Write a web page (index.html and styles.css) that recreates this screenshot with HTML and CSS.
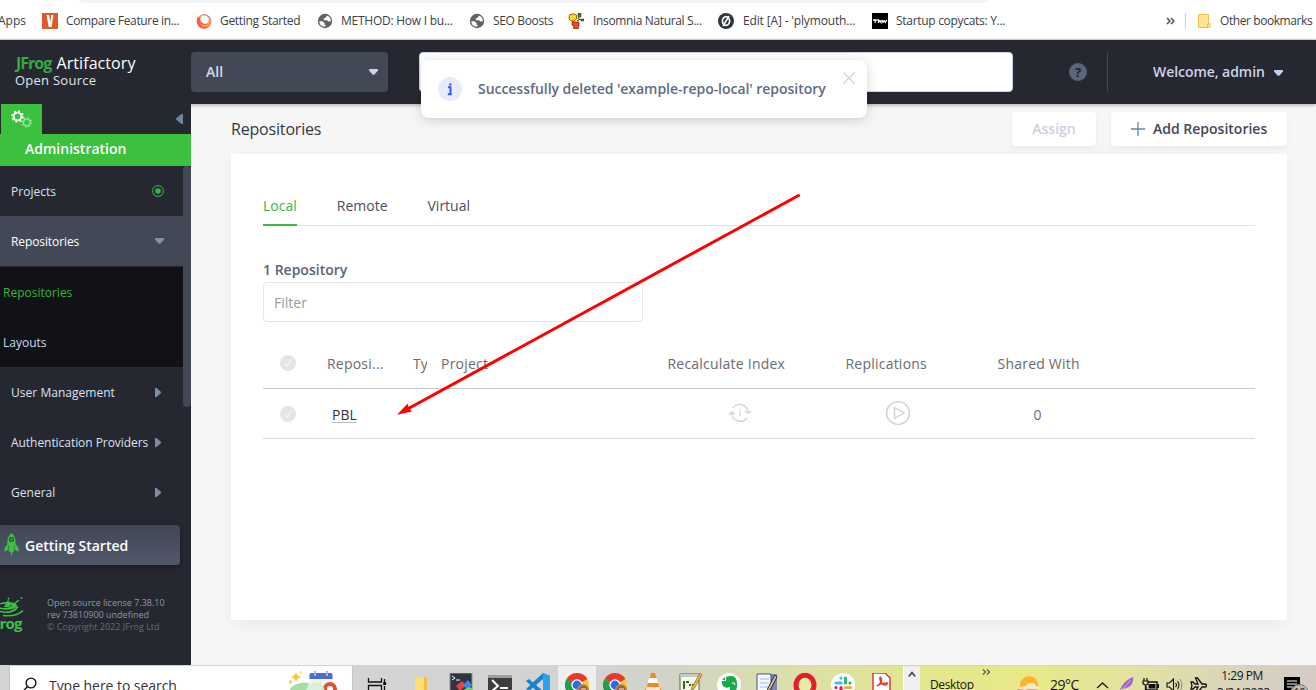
FILE: index.html
```html
<!DOCTYPE html>
<html lang="en">
<head>
<meta charset="utf-8">
<title>JFrog Artifactory - Repositories</title>
<link rel="stylesheet" href="styles.css">
</head>
<body>
<svg width="0" height="0" class="defs">
  <defs>
    <linearGradient id="fire" x1="0" y1="1" x2="1" y2="0"><stop offset="0" stop-color="#ff4f5e"/><stop offset=".4" stop-color="#ff8a3c"/><stop offset=".6" stop-color="#ffb54a"/><stop offset="1" stop-color="#9059ff"/></linearGradient>
    <symbol id="globe" viewBox="0 0 16 16"><circle cx="8" cy="8" r="7.200" fill="#5f6368"/><path d="M2.300 8.300h3.200l2 1.700v1.200l1 .7v1.700C5 14 2.500 12 2.300 8.300M7 5.300l2.300-1V2.800l1.700.1c2 1.200 3 3 2.800 5.300l-2.300.2-1.500-1.200H7.500L6.700 6.500z" fill="#fff"/></symbol>
    <symbol id="chrome" viewBox="0 0 24 24"><circle cx="12" cy="12" r="12" fill="#fcc934"/><path d="M12 12 1.600 6A12 12 0 0 1 22.400 6z" fill="#e33b2e"/><path d="M12 12 1.600 6A12 12 0 0 0 12 24z" fill="#279b4b"/><circle cx="12" cy="12" r="5.700" fill="#fff"/><circle cx="12" cy="12" r="4.400" fill="#2470e8"/><circle cx="18" cy="17" r="6" fill="#b88657"/><path d="M14 16c1-4 6-5 8-1l1 9h-9z" fill="#946342"/><path d="M16 15h5v5h-5z" fill="#d8a47e"/></symbol>
    <symbol id="check" viewBox="0 0 16 16"><circle cx="8" cy="8" r="8" fill="#e5e5e5"/><path d="m4.500 8.500 2.300 2.500 4.700-6" fill="none" stroke="#fff" stroke-width="1"/></symbol>
    <symbol id="caret" viewBox="0 0 9 6"><path d="M.8 0h7.400q.8 0 .8 1v.6L5.500 5.400q-1 .9-2 0L0 1.600V1q0-1 .8-1"/></symbol>
  </defs>
</svg>
<div class="screen">
  <div class="bookmarks">
    <div class="omnibox-edge"></div>
    <div class="bm bm-apps"><span>Apps</span></div>
    <div class="bm bm-1"><svg class="i16" viewBox="0 0 16 16"><path fill="#dc5b27" d="M0 0h16v16H0z"/><path d="M4.500 2h2.700L8.200 10l1-8h2.200L9.600 14H6.700z" fill="#fff"/></svg><span>Compare Feature in...</span></div>
    <div class="bm bm-2"><svg class="i16" viewBox="0 0 16 16"><circle cx="8" cy="8.300" r="7.300" fill="url(#fire)"/><circle cx="8.600" cy="6.600" r="4.200" fill="#fff"/><path d="M1.500 4c-2 6 1 10.500 5 11.500 5 1 8.500-3 9-7-2 3-4.500 3.500-7.500 2.500-3-1-4.500-3-4-6" fill="#ff5a45"/><path d="M4 10c3 3 8 3 11-.5-1 4-8 7-11 .5" fill="#ffb53d"/></svg><span>Getting Started</span></div>
    <div class="bm bm-3"><svg class="i16"><use href="#globe"/></svg><span>METHOD: How I bu...</span></div>
    <div class="bm bm-4"><svg class="i16"><use href="#globe"/></svg><span>SEO Boosts</span></div>
    <div class="bm bm-5"><svg class="i16" viewBox="0 0 16 16"><path d="M10 0h3v4h-3zM12 6h4v2h-3z" fill="#486b24" stroke="#30451c" stroke-width=".5"/><path d="m10 6 1-2M9 8l3-2" stroke="#30451c"/><path d="M1.500 2 5 .700 8.500 2v4L6 8H3L1 6z" fill="#ffd82f" stroke="#9b6500"/><path d="m5 8 2 2" stroke="#5a6414"/><path d="M4 9h7v3l-1 4H6l-1-4H4z" fill="#ef4a22" stroke="#89260e" stroke-width=".8"/></svg><span>Insomnia Natural S...</span></div>
    <div class="bm bm-6"><svg class="i16" viewBox="0 0 16 16"><circle cx="8" cy="8" r="8" fill="#2c363b"/><ellipse cx="8" cy="8" rx="3.600" ry="4.300" fill="none" stroke="#fff" stroke-width="1.700"/><path d="m5 13 6-10" stroke="#fff" stroke-width="1.500"/></svg><span>Edit [A] - 'plymouth...</span></div>
    <div class="bm bm-7"><svg class="i16" viewBox="0 0 16 16"><path d="M0 0h16v16H0z"/><path d="M1 7h4.500M3.200 7v2.800M6.500 10V7l2.500 2.500V7M10.300 7l.7 2.300 1.300-1.500 1 1.500L14.800 7" fill="none" stroke="#fff" stroke-width="1.300"/></svg><span>Startup copycats: Y...</span></div>
    <svg class="more" viewBox="0 0 9 8"><path d="m1 1 3 3-3 3M5 1l3 3-3 3" fill="none" stroke="#4c5054" stroke-width="1.500"/></svg>
    <div class="bm bm-other"><svg class="folder" viewBox="0 0 13 14"><path d="M.5.500h10v9h1.500v4H.5z" fill="#ffe495" stroke="#e7c34a"/><path d="M9.500 13v-3h2" fill="none" stroke="#e7c34a"/></svg><span>Other bookmarks</span></div>
  </div>

  <header class="topbar">
    <div class="brand"><div class="brand-name"><b>JFrog</b> Artifactory</div><div class="brand-sub">Open Source</div></div>
    <div class="scope"><span>All</span><svg class="caret" fill="#cdd2e4"><use href="#caret"/></svg></div>
    <div class="search"></div>
    <div class="help">?</div>
    <div class="user"><span>Welcome, admin</span><svg class="caret" fill="#c5cee8"><use href="#caret"/></svg></div>
  </header>

  <div class="workspace">
    <aside class="sidebar">
      <div class="side-tabs">
        <div class="gear-tab"><svg width="22" height="18" viewBox="0 0 22 18"><g fill="none" stroke="#fff"><circle cx="6.500" cy="6.500" r="3.900" stroke-width="1.900"/><circle cx="6.500" cy="6.500" r="5.300" stroke-width="1.900" stroke-dasharray="1.900 2.260"/></g><g fill="none" stroke="#9ce29e"><circle cx="15.800" cy="12.400" r="3.300" stroke-width="1.300"/><circle cx="15.800" cy="12.400" r="4.600" stroke-width="1.500" stroke-dasharray="1.600 2.010"/></g></svg></div>
        <svg class="collapse" viewBox="0 0 7 10"><path d="M7 0v10H5.500L.5 6q-1-1 0-2l5-4z" fill="#71839d"/></svg>
      </div>
      <div class="admin">Administration</div>
      <div class="menu-wrap">
        <nav class="menu">
          <div class="item"><span>Projects</span><svg width="12" height="12" viewBox="0 0 12 12"><circle cx="6" cy="6" r="5.400" fill="none" stroke="#3c9c42" stroke-width="1.100"/><circle cx="6" cy="6" r="2.800" fill="#3fae48"/></svg></div>
          <div class="item open"><span>Repositories</span><svg class="caret" fill="#7f91ab"><use href="#caret"/></svg></div>
          <div class="submenu"><div class="sub current">Repositories</div><div class="sub">Layouts</div></div>
          <div class="item"><span>User Management</span><svg class="right" viewBox="0 0 6 9"><path d="M0 0h1.500L5.500 3.500q1 1 0 2L1.500 9H0z" fill="#7d8da4"/></svg></div>
          <div class="item"><span class="tight">Authentication Providers</span><svg class="right" viewBox="0 0 6 9"><path d="M0 0h1.500L5.500 3.500q1 1 0 2L1.500 9H0z" fill="#7d8da4"/></svg></div>
          <div class="item"><span>General</span><svg class="right" viewBox="0 0 6 9"><path d="M0 0h1.500L5.500 3.500q1 1 0 2L1.500 9H0z" fill="#7d8da4"/></svg></div>
        </nav>
        <div class="thumb"></div>
      </div>
      <div class="start"><svg width="15" height="24" viewBox="0 0 15 24"><path d="M7.500 0C4 3 3 7 3.500 11L.5 15v4l3-2h1l1 2h1l1 5 1-5h1l1-2h1l3 2v-4l-3-4C12 7 11 3 7.500 0" fill="#42bd48"/><circle cx="7.500" cy="6.500" r="1.900" fill="#42bd48" stroke="#27492f" stroke-width="1.200"/><path d="M4.500 12.500v4m6-4v4" stroke="#28723a" stroke-width=".8"/></svg><span>Getting Started</span></div>
      <footer class="side-foot">
        <div class="frog"><svg width="24" height="20" viewBox="0 0 24 20"><g fill="none" stroke="#42bd48" stroke-width="1.600"><path d="M0 14.500c8 2 15 0 18-5M3 18.500c9 1 16-1 20-5"/></g><path d="M0 6.500C5 4 16 5 17 8.500c0 4-10 5-17 3.500v-1.500c5 1 11 0 12-2-2-2-8-2-12-1z" fill="#42bd48"/><path d="m8 4 .5 2 1.500 3-5 .5 2-3.500zM14 7l5-4" stroke="#42bd48" stroke-width="1.300" fill="#42bd48"/><circle cx="8.500" cy="1.500" r=".9" fill="#42bd48"/><circle cx="21.500" cy="1" r="1" fill="#42bd48"/></svg><b>Frog</b></div>
        <div class="license"><div>Open source license 7.38.10</div><div>rev 73810900 undefined</div><div class="copy">© Copyright 2022 JFrog Ltd</div></div>
      </footer>
    </aside>

    <main class="content">
      <div class="title-row"><h1>Repositories</h1><button class="btn assign">Assign</button><button class="btn add"><svg width="14" height="14" viewBox="0 0 14 14"><path d="M7 0v14M0 7h14" stroke="#6289a9" stroke-width="1.300"/></svg><span>Add Repositories</span></button></div>
      <section class="panel">
        <div class="tabs"><span class="tab active">Local</span><span class="tab remote">Remote</span><span class="tab">Virtual</span></div>
        <div class="count">1 Repository</div>
        <div class="filter">Filter</div>
        <div class="table">
          <div class="row head"><span class="tick"><svg width="16" height="16"><use href="#check"/></svg></span><span>Reposi...</span><span class="clip">Ty</span><span>Project</span><span>Recalculate Index</span><span>Replications</span><span>Shared With</span></div>
          <div class="row body"><span class="tick"><svg width="16" height="16"><use href="#check"/></svg></span><span class="repo"><u>PBL</u></span><span></span><span></span>
            <span class="recalc"><svg width="24" height="20" viewBox="0 0 24 20"><g fill="none" stroke="#d3d3d3" stroke-width="1.300"><path d="M5 5a8.500 8.500 0 0 1 15.300 4M19 15A8.500 8.500 0 0 1 3.700 10M1 12l2.700-3 3.300 2.500M17 8l3.300 2.500L23 8"/><path d="M12 8v5.500M12 5.500v1.300" stroke-width="1.300"/></g></svg></span>
            <span class="replic"><svg width="26" height="26" viewBox="0 0 26 26"><circle cx="13" cy="13" r="11.400" fill="none" stroke="#d0d0d0" stroke-width="1.400"/><path d="m9.500 7.500 9.700 5.500-9.700 5.500z" fill="none" stroke="#d0d0d0" stroke-width="1.400" stroke-linejoin="round"/></svg></span>
            <span class="shared">0</span></div>
        </div>
      </section>
    </main>
  </div>

  <footer class="taskbar">
    <div class="task-search"><svg width="18" height="20" viewBox="0 0 18 20"><circle cx="9" cy="6" r="4.900" fill="none" stroke="#111" stroke-width="1.400"/><path d="m5.500 9.500-5 5.500" stroke="#111" stroke-width="1.400"/></svg><span>Type here to search</span>
      <svg class="doodle" width="60" height="20" viewBox="0 0 60 20"><path d="M7 1q1 4 5 5-4 1-5 5-1-4-5-5 4-1 5-5M2 9l1 2-2 2-2-2M12 0l1 1-1 2-1-2" fill="#ffc72a"/><ellipse cx="17" cy="20" rx="16" ry="8.500" fill="#a6dda1"/><path d="M18 11c10 0 15 5 15 9H22z" fill="#daf5da"/><rect x="20.500" y="2" width="23" height="18" rx="2" fill="#f2f4fa"/><path d="M20.500 8V4q0-2 2-2h19q2 0 2 2v4z" fill="#4b6dd0"/><path d="M26 0v5M38 0v5" stroke="#adb7c9" stroke-width="2"/><circle cx="41" cy="18" r="5" fill="#fff" stroke="#e2542d" stroke-width="4"/><path d="M32 11c-10 0-14 3-15 9h19z" fill="#d9f1da"/></svg>
    </div>
    <div class="tasks">
      <svg class="t t-view" viewBox="0 0 24 24"><path d="M2.500 2v4h13V2M2.500 9.500h13v9h-13zM18.500 3v3m0 4v7" fill="none" stroke="#111" stroke-width="1.300"/><path d="M17.200 6h3v3h-3z" fill="#111"/></svg>
      <svg class="t t-folder" viewBox="0 0 24 24"><path d="M6 2h12v22H6z" fill="#ffdc74"/><path d="M15 2h3v17h2v5h-5z" fill="#f1bd44"/></svg>
      <svg class="t t-term" viewBox="0 0 24 24"><path d="M1 0h22v24H1z" fill="#30353d" stroke="#899097"/><path d="m3 3 3 2-3 2M7 7h4" fill="none" stroke="#fff"/><path d="m7 13 6-5 4 4-6 6z" fill="#e94242"/><path d="m14 12 5-5 4 5-5 5z" fill="#3f83ef"/><path d="m14 17 6-3 3 1v6h-9z" fill="#74d943"/></svg>
      <svg class="t" viewBox="0 0 24 24"><path d="M0 2h24v22H0z" fill="#3b3d3f"/><path d="M0 2h24v3H0z" fill="#9b9da0"/><path d="m4 7 6 6-6 5M12 15h8" fill="none" stroke="#fff" stroke-width="2"/></svg>
      <svg class="t t-code" viewBox="0 0 24 24"><path d="m17 0 7 3v18l-7 3L0 8l3-2 14 12V6L3 18l-3-2z" fill="#1683ce"/><path d="m17 0 7 3v18l-7 3z" fill="#29a4ec"/></svg>
      <div class="running"><svg class="t" viewBox="0 0 24 24"><use href="#chrome"/></svg></div>
      <svg class="t" viewBox="0 0 24 24"><use href="#chrome"/></svg>
      <svg class="t" viewBox="0 0 24 24"><path d="M10 0h4l6 20H4z" fill="#f08924"/><path d="M8.200 5h7.400l1.600 5H6.600z" fill="#fff"/><path d="M4 16h16l4 8H0z" fill="#ef7f1a"/><path d="M6 14h12l1 3q-7 3-14 0z" fill="#f6e8d8"/></svg>
      <svg class="t" viewBox="0 0 24 24"><path d="M1 1h19v23H1z" fill="#f7f8ec" stroke="#596251"/><path d="M1 1h19v3H1z" fill="#c5c9c2"/><path d="M5 8v8M7 9h3M10 12h2m1 0h2" stroke="#38641f" stroke-width="2"/><path d="m21 0 2 2-8 14-3 1 1-3z" fill="#edb333" stroke="#6b5b32" stroke-width=".6"/></svg>
      <svg class="t" viewBox="0 0 24 24"><circle cx="12" cy="12" r="12" fill="#fff"/><path d="M5 8h4V4c5-2 9-1 10 2 2 5 1 10-1 14h-5v-6c-5 2-9-1-8-6" fill="#18ab4b"/><path d="m5 7 3-3v3z" fill="#18ab4b"/><path d="M15 10q3-1 3 2" stroke="#fff" fill="none"/></svg>
      <svg class="t" viewBox="0 0 24 24"><path d="M2 1h20v23H2z" fill="#7d86b2"/><path d="M2 1h14v23H2z" fill="#f4f7ff" stroke="#454f82"/><path d="M5 6h9M5 10h9M5 14h9" stroke="#9ebee4"/><path d="m20 2 2 2-7 13-3 2 1-4z" fill="#e8c27c" stroke="#252845"/></svg>
      <svg class="t" viewBox="0 0 24 24"><ellipse cx="12" cy="12" rx="9" ry="9.800" fill="#e8eba5" stroke="#e51d2b" stroke-width="5"/></svg>
      <svg class="t" viewBox="0 0 24 24"><circle cx="12" cy="12" r="12" fill="#fff"/><g fill="none" stroke-width="3.200" stroke-linecap="round"><path d="M10 5v.1M5 10h5" stroke="#36c5f0"/><path d="M14.500 5v5M19 10v.1" stroke="#2eb67d"/><path d="M5 14.500v.1M10 14.500v5" stroke="#e01e5a"/><path d="M14.500 19.500v.1M14.500 14.500h5" stroke="#ecb22e"/></g></svg>
      <svg class="t" viewBox="0 0 24 24"><path d="M4 0h12l5 5v19H4z" fill="#fff" stroke="#d82f2a" stroke-width="1.400"/><path d="M8 13c4-2 5-6 4-8s-2 0 0 4c2 3 4 4 6 2s-6-1-10 2" fill="none" stroke="#df3932" stroke-width="1.500"/><path d="M8 18h9" stroke="#444" stroke-width="2"/></svg>
    </div>
    <div class="scroll-up"><svg width="8" height="7" viewBox="0 0 8 7"><path d="m.8 5.500 3.200-4 3.200 4" fill="none" stroke="#444" stroke-width="1.600"/></svg></div>
    <div class="tray">
      <span class="desktop">Desktop</span><svg class="chev" viewBox="0 0 9 6"><path d="m1 .5 2.500 2.500L1 5.500M5 .5 7.500 3 5 5.500" fill="none" stroke="#565b73" stroke-width="1.200"/></svg>
      <svg class="weather" viewBox="0 0 24 16"><circle cx="12" cy="9" r="9" fill="#ffb52a"/><path d="M1 13q2-3 8-3 2-4 7-3 3 1 3 3 3 0 4 2l-7 4H5z" fill="#f9e9cb"/><path d="M0 13q5 0 8 1 6-2 14 0l-4 2H3z" fill="#c69274"/></svg><span class="temp">29°C</span>
      <svg class="up" viewBox="0 0 13 8"><path d="m1 7 5.500-5L12 7" fill="none" stroke="#222" stroke-width="1.400"/></svg>
      <svg class="feather" viewBox="0 0 15 17"><path d="M0 16C2 9 5 4 14 0c1 7-4 12-12 12" fill="#9d65c5"/><path d="M0 16 12 3" stroke="#d7b6ee"/></svg>
      <svg class="battery" viewBox="0 0 17 16"><path d="M6 4h9v8H4V8" fill="none" stroke="#111" stroke-width="1.400"/><path d="M6.500 6h7v4.500h-7zM15 6h2v4h-2z" fill="#111"/><path d="M1 3h5v2.500q-2.500 3-5 0zM2 0v3M5 0v3M3.500 7v7" fill="none" stroke="#111" stroke-width="1.200"/></svg>
      <svg class="speaker" viewBox="0 0 17 14"><path d="M1 5h2.500l4-4v12l-4-4H1zM9.500 5q2 2 0 4M11.500 3q3 4 0 8" fill="none" stroke="#111" stroke-width="1.100"/><path d="M14 1q4 6 0 12" fill="none" stroke="#8b8c83"/></svg>
      <svg class="plane" viewBox="0 0 17 16"><path d="M1 5h2l2 2h3L5.500 1h2L12 7h2.500q2 0 2 1.500T14.500 10H12l-4.500 6h-2L8 10H5l-2 2H1l1-3.500z" fill="none" stroke="#111" stroke-width="1.300"/></svg>
      <div class="clock"><div>1:29 PM</div><div>3/24/2022</div></div>
      <div class="notify"><svg width="16" height="16" viewBox="0 0 16 16"><path d="M0 0h16v16H0z"/><path d="M3 4h10M3 7h10M3 10h6" stroke="#fff" stroke-width="1.200"/></svg><span class="badge">10</span></div>
    </div>
  </footer>

  <div class="toast"><div class="info"><svg width="24" height="24" viewBox="0 0 24 24"><circle cx="12" cy="12" r="12" fill="#e8ebfc"/><path d="M10 10.300h2.500V17M9.800 17.200h4" fill="none" stroke="#3557e6" stroke-width="1.900"/><path d="M11.200 6.500h2.300v2h-2.300z" fill="#3557e6"/></svg></div><span>Successfully deleted 'example-repo-local' repository</span><svg class="close" viewBox="0 0 12 12"><path d="m.5.500 11 11m0-11-11 11" stroke="#cad2e8" stroke-width="1.300"/></svg></div>
  <svg class="annotation" viewBox="0 0 1316 690"><path d="m798.500 195.500-390 213" stroke="#f00" stroke-width="3" stroke-linecap="round"/><path d="m397 414.700 10.500-11 1.500 4.300 3 3.500z" fill="#f00"/></svg>
</div>
</body>
</html>
```
FILE: styles.css
```css
* { box-sizing: border-box; }
body { margin: 0; overflow: hidden; font-family: "Open Sans", sans-serif; }
.defs { position: absolute; }
svg { flex: none; display: block; }
.screen { position: relative; width: 1316px; height: 690px; overflow: hidden; display: flex; flex-direction: column; background: #f6f6f6; }

/* bookmarks */
.bookmarks { position: relative; height: 40px; flex: none; display: flex; align-items: center; padding-top: 2px; background: #fff; border-bottom: 1px solid #d9dadd; font: 12px/16px "Open Sans", sans-serif; color: #3c4043; white-space: nowrap; }
.omnibox-edge { position: absolute; left: 72px; top: -25px; width: 922px; height: 28px; border-radius: 14px; background: #f1f3f4; }
.bm { display: flex; align-items: center; gap: 8px; flex: none; }
.bm-apps { width: 42px; }
.bm-apps span { margin-left: -2px; }
.i16 { width: 16px; height: 16px; }
.bm-1 { width: 154px; letter-spacing: -.35px; }
.bm-2 { width: 121px; letter-spacing: -.3px; }
.bm-3 { width: 152px; letter-spacing: -.25px; }
.bm-4 { width: 99px; letter-spacing: -.35px; }
.bm-5 { width: 150px; gap: 9px; letter-spacing: -.35px; }
.bm-6 { width: 154px; gap: 9px; letter-spacing: -.15px; }
.bm-7 { width: 294px; letter-spacing: -.3px; }
.more { width: 9px; height: 8px; margin-right: 10px; }
.bm-other { border-left: 1px solid #cfd2d6; height: 16px; padding-left: 12px; gap: 9px; letter-spacing: -.42px; }
.folder { width: 13px; height: 14px; }

/* top bar */
.topbar { height: 64px; flex: none; display: flex; align-items: center; background: #252831; box-shadow: 0 1px 4px #0005; z-index: 1; }
.brand { width: 191px; padding: 0 0 2px 15px; color: #fff; }
.brand-name { font-size: 16px; line-height: 18px; letter-spacing: .07px; padding-left: 1px; }
.brand-name b { font-weight: 700; color: #37a93f; letter-spacing: -1px; margin-right: 1px; }
.brand-sub { font-size: 13px; line-height: 16px; color: #e3e4e7; letter-spacing: .25px; }
.scope { width: 197px; height: 40px; display: flex; align-items: center; justify-content: space-between; padding: 0 10px 1px 15px; background: #434857; border-radius: 4px; font-weight: 600; font-size: 14px; color: #d7dcec; }
.caret { width: 9px; height: 6px; }
.search { width: 594px; height: 40px; margin-left: 31px; border: 1px solid #cfd3e7; border-radius: 4px; background: #fff; }
.help { width: 18px; height: 18px; margin-left: 56px; border-radius: 50%; background: #5a6779; color: #20242d; font: 700 13px/18px "Open Sans", sans-serif; text-align: center; }
.user { display: flex; align-items: center; gap: 9px; height: 40px; margin-left: 20px; padding: 0 0 1px 45px; border-left: 1px solid #444957; font-size: 14px; font-weight: 600; letter-spacing: -.05px; color: #ccd3ea; white-space: nowrap; }
.user .caret { margin-top: 2px; }

/* sidebar */
.workspace { height: 561px; flex: none; display: flex; }
.sidebar { width: 191px; background: #252831; display: flex; flex-direction: column; z-index: 2; }
.side-tabs { height: 30px; display: flex; justify-content: space-between; padding: 0 8px 0 1px; }
.gear-tab { width: 41px; background: #3bc13e; padding: 6px 0 0 10px; }
.collapse { width: 7px; height: 10px; margin-top: 10px; }
.admin { height: 32px; background: #3bc13e; color: #fff; padding-left: 25px; font-size: 14px; font-weight: 600; line-height: 30px; }
.menu-wrap { display: flex; height: 351px; }
.menu { width: 183px; flex: none; }
.item { height: 50px; display: flex; align-items: center; justify-content: space-between; padding: 0 19px 0 11px; font-size: 12px; letter-spacing: .03px; color: #dbe1f3; white-space: nowrap; }
.item.open { background: #434857; color: #fff; font-weight: 500; letter-spacing: -.1px; }
.tight { letter-spacing: -.05px; }
.right { width: 6px; height: 9px; margin-right: 3px; }
.submenu { height: 101px; padding-top: 1px; background: #111216; border-top: 1px solid #252831; }
.sub { height: 50px; padding-left: 3px; line-height: 50px; font-size: 12px; color: #cfd8ec; }
.sub.current { color: #34b538; }
.thumb { width: 8px; height: 241px; background: #434857; border-radius: 4px; }
.start { width: 180px; height: 40px; margin-top: 8px; display: flex; align-items: center; gap: 6px; padding-left: 4px; border-radius: 0 4px 4px 0; background: linear-gradient(#404655, #50586a); box-shadow: 0 2px 5px #0006; color: #fff; font-weight: 600; font-size: 14px; }
.side-foot { display: flex; padding-top: 32px; }
.frog { width: 47px; height: 42px; overflow: hidden; color: #42bd48; }
.frog b { display: block; font: 700 15px/18px "Open Sans", sans-serif; margin: -3px 0 0 -8px; letter-spacing: -.8px; }
.license { font-size: 9px; line-height: 12px; color: #9297a5; white-space: nowrap; }
.license .copy { color: #686b73; }

/* content */
.content { flex: 1; padding-left: 40px; padding-right: 29px; }
.title-row { display: flex; align-items: center; height: 50px; }
h1 { flex: 1; margin: 0; font-size: 16px; font-weight: 400; color: #333842; letter-spacing: -.18px; }
.btn { height: 34px; margin-top: -1px; padding: 0; border: 0; border-radius: 4px; background: #fff; box-shadow: 0 2px 5px #0000000d; font: 600 14px "Open Sans", sans-serif; }
.assign { width: 84px; margin-right: 15px; color: #cbd1e5; }
.add { width: 176px; display: flex; align-items: center; gap: 8px; padding-left: 20px; color: #414857; white-space: nowrap; }
.panel { height: 466px; padding: 32px; background: #fff; border-radius: 2px; box-shadow: 0 4px 16px #0000000d; font-size: 14px; }
.tabs { display: flex; gap: 40px; height: 40px; border-bottom: 1px solid #e2e3e5; line-height: 40px; color: #4a5060; }
.tab { height: 40px; }
.tab.active { color: #3eb544; border-bottom: 2px solid #3dba45; }
.count { margin-top: 34px; height: 22px; line-height: 20px; font-weight: 600; color: #5b6275; }
.filter { width: 380px; height: 40px; padding-left: 10px; line-height: 39px; border: 1px solid #e4e5e8; border-radius: 4px; color: #999; }
.table { margin-top: 17px; color: #6b6b6b; }
.row { display: grid; grid-template-columns: 64px 86px 28px 226.500px 178px 152px 1fr; height: 50px; align-items: center; border-bottom: 1px solid #d9d9d9; }
.head { border-color: #c8c8c8; font-weight: 500; letter-spacing: .22px; }
.body { padding-top: 2px; }
.tick { padding: 0 0 1px 17px; }
.clip { width: 14px; overflow: hidden; letter-spacing: 0; }
.repo { padding-left: 5px; color: #333; }
.repo u { text-decoration-color: #b8b8b8; text-decoration-thickness: 1px; text-underline-offset: 2px; }
.recalc { padding: 0 0 3px 60px; }
.replic { padding: 0 0 3px 39px; }
.shared { padding-left: 36px; }

/* taskbar */
.taskbar { height: 25px; flex: none; display: flex; overflow: hidden; background: linear-gradient(90deg, #d3d3d3 0 45%, #d2d4c6 51%, #dcdfa9 60%, #e3e68f 70%, #e9e988 78%, #e4e2a0 86%, #d9d4be 94%, #d6cbc3); border-top: 1px solid #d2d2d2; }
.task-search { width: 344px; height: 40px; margin-left: 9px; flex: none; display: flex; background: #fff; border-left: 1px solid #c4c4c4; border-right: 1px solid #c4c4c4; padding: 11px 0 0 12px; line-height: 17px; color: #333; white-space: nowrap; }
.task-search span { margin-left: 9px; width: 129px; font-size: 14px; letter-spacing: -.05px; }
.doodle { margin: -6px 0 0 111px; }
.tasks { width: 550px; flex: none; display: flex; align-items: flex-start; padding-left: 13px; gap: 14px; }
.t { width: 24px; height: 24px; margin-top: 7px; }
.t-view { margin-top: 10px; }
.t-folder { margin: 9px 2px 0 5px; }
.t-term { margin-right: 1px; }
.t-code { margin-right: 1px; }
.running { width: 38px; height: 25px; padding-left: 7px; margin: 0 -7px; background: #eee; }
.scroll-up { width: 17px; flex: none; padding: 5px 0 0 4px; background: #f0f0f0; border-left: 1px solid #fff; }
.tray { flex: 1; display: flex; align-items: flex-start; font-size: 12px; color: #161616; }
.desktop { width: 51px; padding: 10px 0 0 10px; line-height: 17px; font-size: 12px; letter-spacing: -.38px; }
.chev { width: 9px; height: 6px; margin: 3px 0 0 11px; }
.weather { width: 24px; height: 16px; margin: 10px 0 0 26px; }
.temp { width: 30px; margin: 10px 0 0 9px; font-size: 14px; line-height: 18px; letter-spacing: -.5px; }
.up { width: 13px; height: 8px; margin: 15px 0 0 16px; }
.feather { width: 15px; height: 17px; margin: 11px 0 0 10px; }
.battery { width: 17px; height: 16px; margin: 12px 0 0 8px; }
.speaker { width: 17px; height: 14px; margin: 12px 0 0 7px; }
.plane { width: 17px; height: 16px; margin: 11px 0 0 7px; }
.clock { width: 50px; margin: 1px 0 0 10px; text-align: center; line-height: 17px; letter-spacing: -.45px; white-space: nowrap; }
.notify { position: relative; margin: 11px 0 0 17px; }
.badge { position: absolute; left: 6px; top: 7px; width: 19px; height: 19px; border: 1px solid #777; border-radius: 50%; background: #bdb9b3; font-size: 10px; line-height: 14px; text-align: center; }

/* overlays */
.toast { position: absolute; left: 421px; top: 60px; width: 446px; height: 58px; z-index: 4; display: flex; align-items: center; padding-left: 17px; border-radius: 8px; background: #fff; box-shadow: 0 2px 12px #0000002b; font-size: 14px; font-weight: 600; letter-spacing: -.04px; color: #5f6b7f; white-space: nowrap; }
.toast > span { width: 350px; margin: -2px 0 0 16px; }
.close { width: 12px; height: 12px; margin: -23px 0 0 15px; }
.annotation { position: absolute; left: 0; top: 0; width: 1316px; height: 690px; z-index: 5; pointer-events: none; }
```
